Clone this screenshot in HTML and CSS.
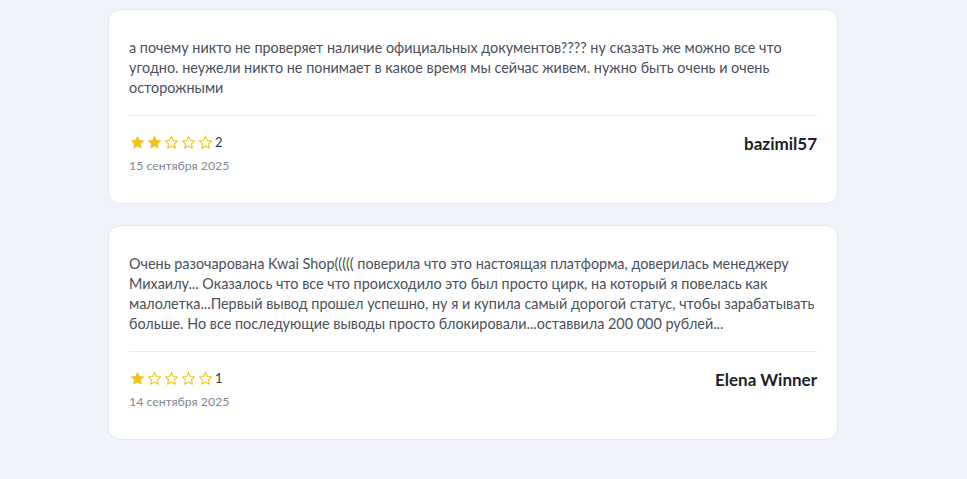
FILE: index.html
```html
<!DOCTYPE html>
<html lang="ru">
<head>
<meta charset="utf-8">
<link rel="stylesheet" href="styles.css">
</head>
<body>
<svg width="0" height="0" class="defs">
  <defs>
    <symbol id="star-full" viewBox="0 0 24 24"><path d="M12 2.3l2.95 6.2 6.75.85-5 4.7 1.3 6.75L12 17.45l-6 3.35 1.3-6.75-5-4.7 6.75-.85z" fill="#f1c21b"/></symbol>
    <symbol id="star-empty" viewBox="0 0 24 24"><path d="M12 3.6l2.6 5.5 6 .7-4.4 4.2 1.2 6L12 17l-5.4 3 1.2-6-4.4-4.2 6-.7z" fill="none" stroke="#f1c21b" stroke-width="1.5" stroke-linejoin="round"/></symbol>
  </defs>
</svg>
<main class="list">
  <article class="card">
    <p class="text">а почему никто не проверяет наличие официальных документов???? ну сказать же можно все что угодно. неужели никто не понимает в какое время мы сейчас живем. нужно быть очень и очень осторожными</p>
    <div class="meta">
      <div class="left">
        <div class="rating">
          <svg class="star"><use href="#star-full"/></svg>
          <svg class="star"><use href="#star-full"/></svg>
          <svg class="star"><use href="#star-empty"/></svg>
          <svg class="star"><use href="#star-empty"/></svg>
          <svg class="star"><use href="#star-empty"/></svg>
          <span class="count">2</span>
        </div>
        <div class="date">15 сентября 2025</div>
      </div>
      <div class="author">bazimil57</div>
    </div>
  </article>
  <article class="card">
    <p class="text">Очень разочарована Kwai Shop((((( поверила что это настоящая платформа, доверилась менеджеру Михаилу... Оказалось что все что происходило это был просто цирк, на который я повелась как малолетка...Первый вывод прошел успешно, ну я и купила самый дорогой статус, чтобы зарабатывать больше. Но все последующие выводы просто блокировали...оставвила 200 000 рублей...</p>
    <div class="meta">
      <div class="left">
        <div class="rating">
          <svg class="star"><use href="#star-full"/></svg>
          <svg class="star"><use href="#star-empty"/></svg>
          <svg class="star"><use href="#star-empty"/></svg>
          <svg class="star"><use href="#star-empty"/></svg>
          <svg class="star"><use href="#star-empty"/></svg>
          <span class="count">1</span>
        </div>
        <div class="date">14 сентября 2025</div>
      </div>
      <div class="author">Elena Winner</div>
    </div>
  </article>
</main>
</body>
</html>
```

FILE: styles.css
```css
html, body {
  margin: 0;
  padding: 0;
  background: #f0f4fa;
}
body {
  font-family: "Lato", "Noto Sans", sans-serif;
  color: #444a55;
}
.defs {
  position: absolute;
  width: 0;
  height: 0;
}
.list {
  width: 730px;
  margin: 0 0 0 108px;
  padding-top: 9px;
  display: flex;
  flex-direction: column;
  gap: 21px;
}
.card {
  background: #ffffff;
  border: 1px solid #e4e8ef;
  border-radius: 12px;
  padding: 28px 20px 28px;
}
.text {
  margin: 0;
  font-size: 14.4px;
  line-height: 20px;
  color: #4a505c;
  padding-bottom: 17px;
  border-bottom: 1px solid #e9ecf1;
}
.meta {
  display: flex;
  justify-content: space-between;
  align-items: flex-start;
  padding-top: 17px;
}
.rating {
  display: flex;
  align-items: center;
  height: 18px;
}
.star {
  width: 17px;
  height: 17px;
}
.count {
  font-size: 13px;
  color: #333a45;
  margin-left: 1px;
}
.date {
  margin-top: 6px;
  font-size: 12.3px;
  line-height: 18px;
  color: #7f8796;
}
.author {
  font-size: 17px;
  font-weight: 700;
  color: #1c1f2a;
}
```
